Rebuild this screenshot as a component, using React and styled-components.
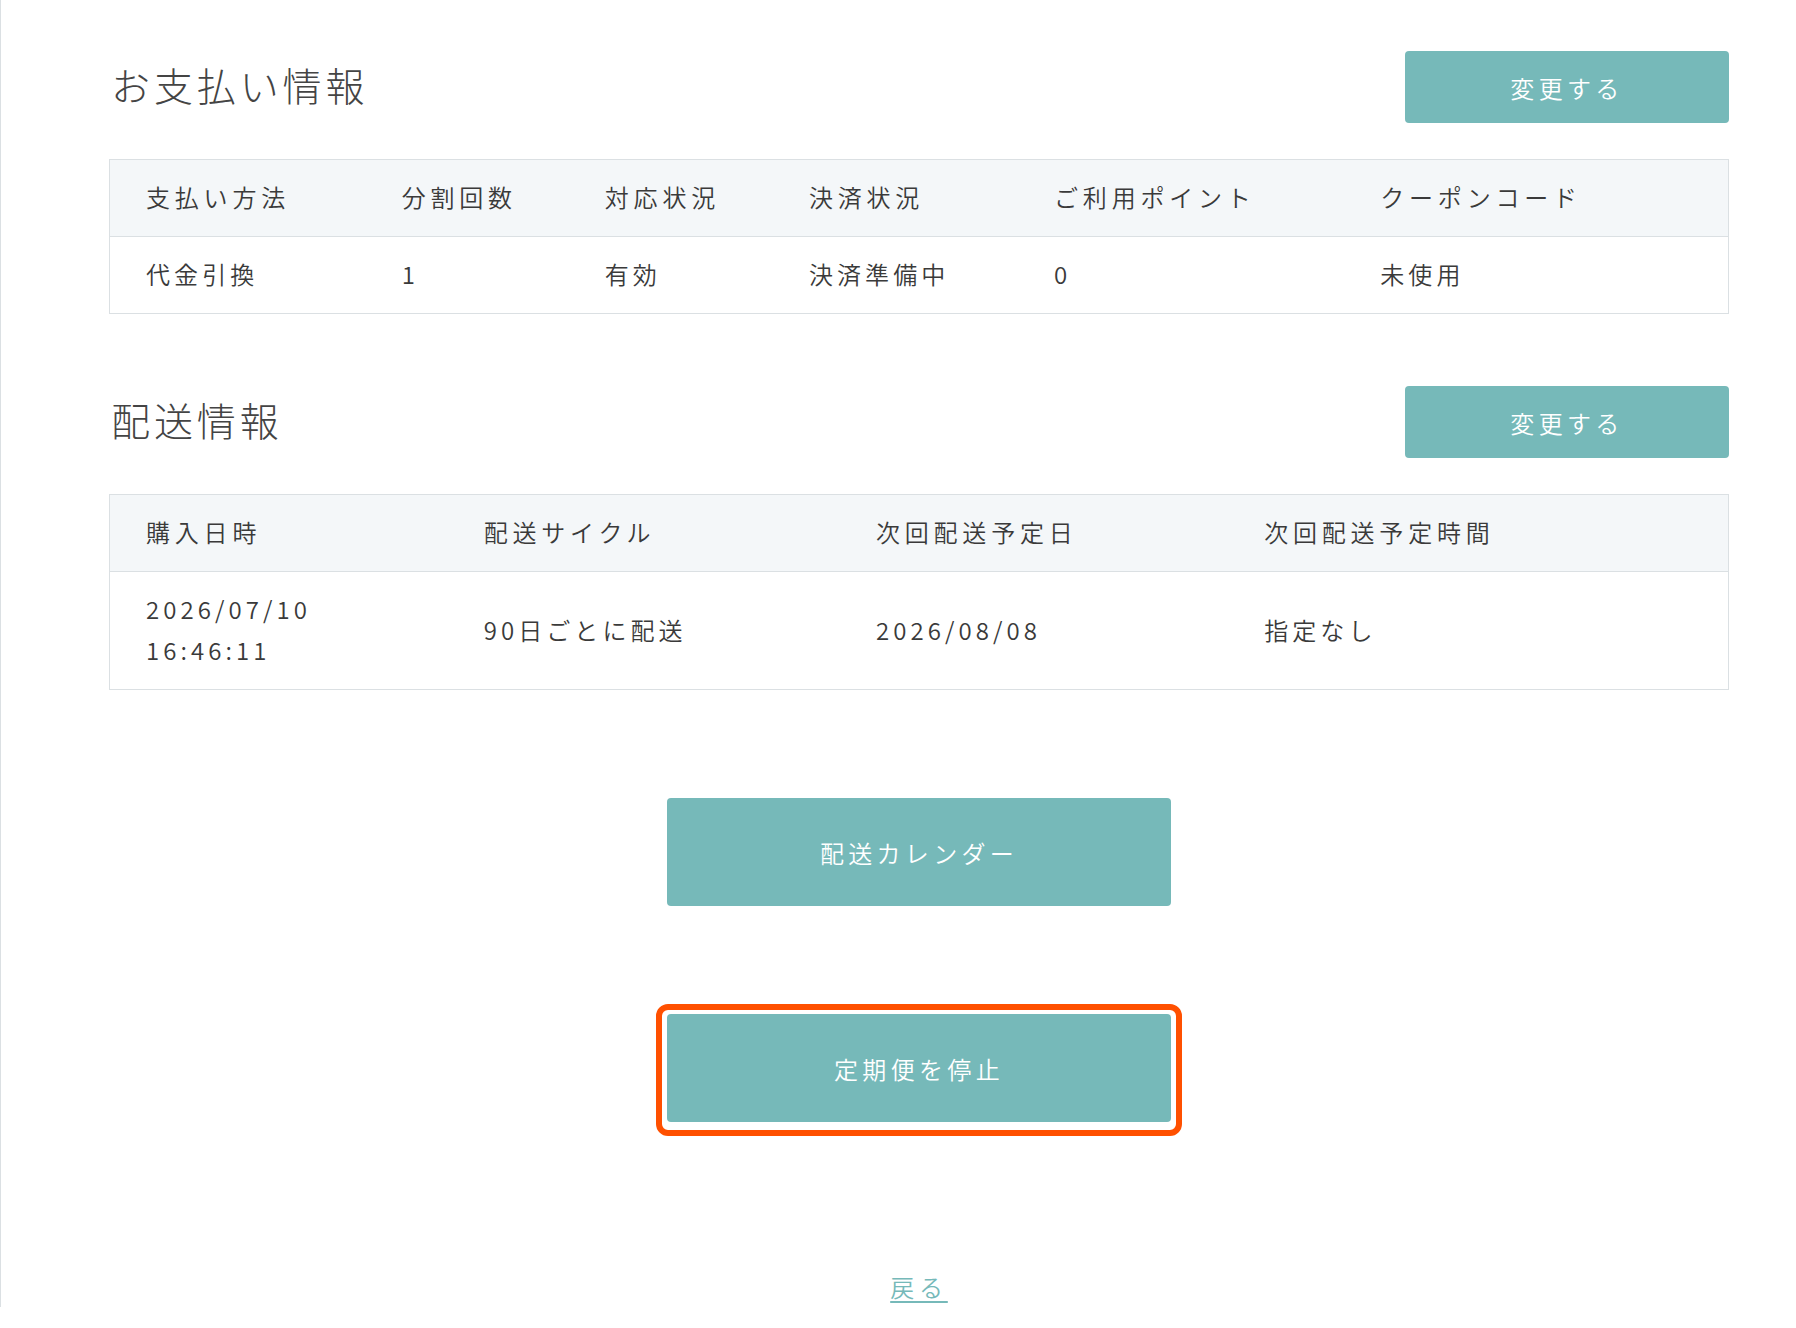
import styled, { createGlobalStyle } from 'styled-components';

const paymentColumns = [
  { label: '支払い方法', width: 256 },
  { label: '分割回数', width: 203 },
  { label: '対応状況', width: 204 },
  { label: '決済状況', width: 245 },
  { label: 'ご利用ポイント', width: 326 },
  { label: 'クーポンコード', width: 384 },
];

const paymentRow = ['代金引換', '1', '有効', '決済準備中', '0', '未使用'];

const shippingColumns = [
  { label: '購入日時', width: 338 },
  { label: '配送サイクル', width: 392 },
  { label: '次回配送予定日', width: 388 },
  { label: '次回配送予定時間', width: 500 },
];

const shippingRow = [
  ['2026/07/10', '16:46:11'],
  ['90日ごとに配送'],
  ['2026/08/08'],
  ['指定なし'],
];

function InfoTable({ columns, row }) {
  return (
    <Table>
      <colgroup>
        {columns.map(col => (
          <col key={col.label} style={{ width: col.width }} />
        ))}
      </colgroup>
      <thead>
        <tr>
          {columns.map(col => (
            <HeadCell key={col.label}>{col.label}</HeadCell>
          ))}
        </tr>
      </thead>
      <tbody>
        <tr>
          {row.map((value, i) => (
            <BodyCell key={i}>
              {Array.isArray(value)
                ? value.map(line => <Line key={line}>{line}</Line>)
                : value}
            </BodyCell>
          ))}
        </tr>
      </tbody>
    </Table>
  );
}

export default function App() {
  return (
    <>
      <GlobalStyle />
      <Page>
        <Section>
          <SectionHeader>
            <Title>お支払い情報</Title>
            <SmallButton type="button">変更する</SmallButton>
          </SectionHeader>
          <InfoTable columns={paymentColumns} row={paymentRow} />
        </Section>

        <Section>
          <SectionHeader>
            <Title>配送情報</Title>
            <SmallButton type="button">変更する</SmallButton>
          </SectionHeader>
          <InfoTable columns={shippingColumns} row={shippingRow} />
        </Section>

        <Actions>
          <LargeButton type="button">配送カレンダー</LargeButton>
          <Highlight>
            <LargeButton type="button">定期便を停止</LargeButton>
          </Highlight>
          <BackLink href="#">戻る</BackLink>
        </Actions>
      </Page>
    </>
  );
}

const GlobalStyle = createGlobalStyle`
  body {
    margin: 0;
    background: #ffffff;
    font-family: "Noto Sans CJK JP", "Noto Sans", sans-serif;
    font-weight: 350;
    color: #3a3a3a;
  }
`;

const Page = styled.main`
  border-left: 1px solid #dbe0e3;
  padding: 51px 67px 0 108px;
  display: flex;
  flex-direction: column;
  gap: 72px;
`;

const Section = styled.section`
  display: flex;
  flex-direction: column;
  gap: 36px;
`;

const SectionHeader = styled.div`
  display: flex;
  align-items: center;
  justify-content: space-between;
  height: 72px;
`;

const Title = styled.h2`
  margin: 0 0 0 2px;
  padding-bottom: 6px;
  font-size: 39px;
  font-weight: 300;
  letter-spacing: 0.1em;
  color: #444444;
`;

const buttonBase = `
  border: none;
  border-radius: 4px;
  background: #76b9b9;
  color: #ffffff;
  font-family: "Noto Sans CJK JP", "Noto Sans", sans-serif;
  font-size: 24px;
  font-weight: 350;
  letter-spacing: 0.18em;
  cursor: pointer;
`;

const SmallButton = styled.button`
  ${buttonBase}
  width: 324px;
  height: 72px;
`;

const LargeButton = styled.button`
  ${buttonBase}
  display: block;
  width: 504px;
  height: 108px;
`;

const Table = styled.table`
  width: 100%;
  table-layout: fixed;
  border-collapse: collapse;
  border: 1px solid #dbe0e3;
`;

const HeadCell = styled.th`
  padding: 17px 0 19px 36px;
  background: #f4f7f9;
  border-bottom: 1px solid #dbe0e3;
  text-align: left;
  font-size: 24px;
  font-weight: 350;
  line-height: 40px;
  letter-spacing: 0.2em;
  color: #3a3a3a;
`;

const BodyCell = styled.td`
  padding: 17px 0 19px 36px;
  font-size: 24px;
  line-height: 40px;
  letter-spacing: 0.17em;
  color: #3a3a3a;
  vertical-align: middle;
`;

const Line = styled.div`
  & + & {
    margin-top: 1px;
  }
`;

const Actions = styled.div`
  display: flex;
  flex-direction: column;
  align-items: center;
  padding-top: 36px;
`;

const Highlight = styled.div`
  margin-top: 98px;
  padding: 4px 5px 8px;
  border: 6px solid #ff5000;
  border-radius: 12px;
`;

const BackLink = styled.a`
  margin-top: 131px;
  font-size: 24px;
  line-height: 40px;
  letter-spacing: 0.2em;
  color: #76b9b9;
  text-decoration: underline;
  text-underline-offset: 4px;
`;
